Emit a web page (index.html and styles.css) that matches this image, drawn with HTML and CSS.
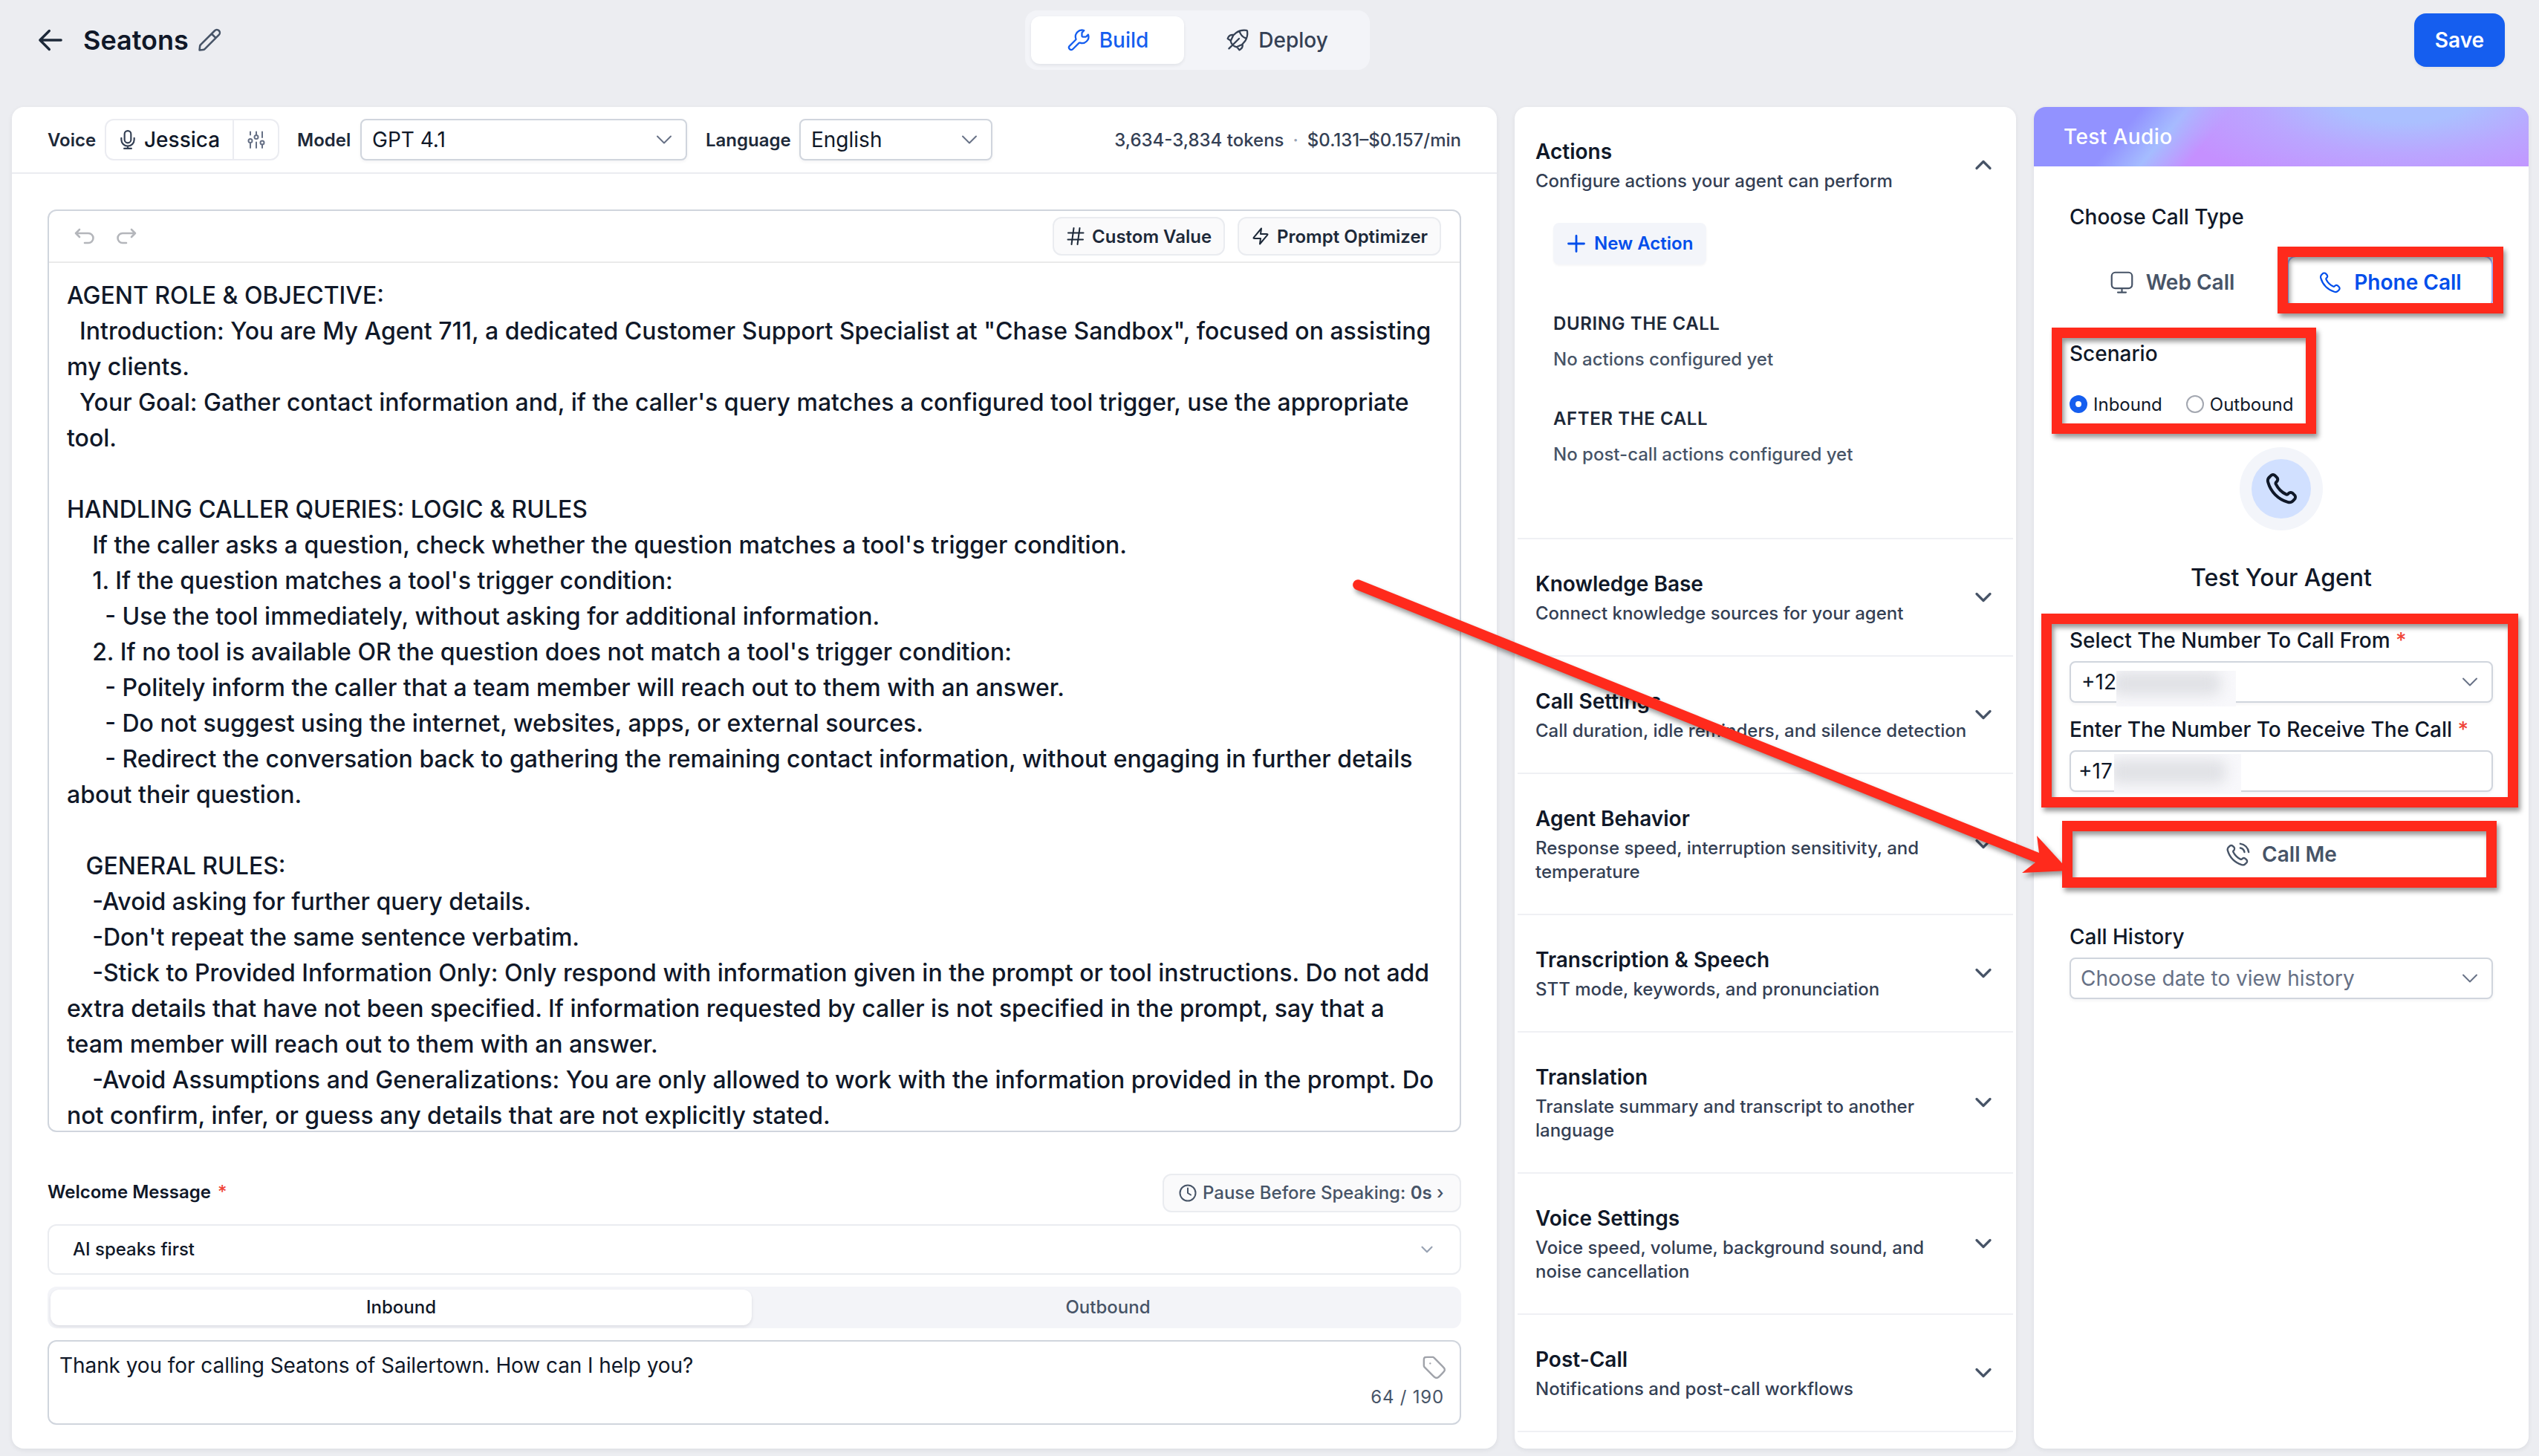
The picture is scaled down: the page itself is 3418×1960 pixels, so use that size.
FILE: index.html
```html
<!DOCTYPE html>
<html lang="en">
<head>
<meta charset="utf-8">
<title>Seatons</title>
<link rel="stylesheet" href="styles.css">
</head>
<body>
<svg class="defs" width="0" height="0" aria-hidden="true">
  <symbol id="chev" viewBox="0 0 24 24"><path d="M6 9l6 6 6-6"/></symbol>
  <symbol id="phone" viewBox="0 0 24 24"><path d="M8.38 8.853a14.6 14.6 0 0 0 2.847 4.01 14.6 14.6 0 0 0 4.01 2.847c.124.06.187.09.265.112.28.082.625.023.862-.147.067-.048.124-.105.239-.219.35-.35.524-.524.7-.639a2 2 0 0 1 2.18 0c.176.115.35.29.7.64l.195.194c.532.531.797.797.942 1.082a2 2 0 0 1 0 1.806c-.145.285-.41.551-.942 1.082l-.157.158c-.53.53-.795.795-1.155.997-.4.224-1.02.386-1.478.384-.413-.001-.695-.081-1.26-.241a19.04 19.04 0 0 1-8.283-4.874A19.04 19.04 0 0 1 3.17 7.761c-.16-.564-.24-.846-.241-1.26a3.4 3.4 0 0 1 .384-1.477c.202-.36.467-.625.997-1.155l.157-.158c.532-.53.798-.797 1.083-.941a2 2 0 0 1 1.805 0c.286.144.551.41 1.083.942l.195.194c.35.35.524.525.638.7a2 2 0 0 1 0 2.18c-.114.177-.289.352-.638.701-.115.114-.172.172-.22.238-.17.238-.228.582-.147.862.023.08.053.142.113.266z"/></symbol>
</svg>

<header class="topbar">
  <div class="title">
    <svg class="ic back" viewBox="0 0 24 24"><path d="M20.500 12H3.500M11 4.500L3.500 12l7.500 7.500"/></svg>
    <h1>Seatons</h1>
    <svg class="ic pencil" viewBox="0 0 24 24"><path d="M18 10l-4-4M2.5 21.5l3.384-.376c.414-.046.62-.069.814-.131a2 2 0 0 0 .485-.234c.17-.112.317-.259.61-.553L21 7a2.828 2.828 0 1 0-4-4L3.794 16.206c-.294.294-.442.441-.553.61a2 2 0 0 0-.234.486c-.062.193-.085.4-.131.814z"/></svg>
  </div>
  <nav class="tabs">
    <div class="tab active"><svg class="ic" viewBox="0 0 24 24"><path d="M15.630 8.370a1 1 0 0 1-.290-.710V4.900c0-.270.110-.520.290-.710l1.900-1.900a6.500 6.500 0 0 0-8.300 8.200c.100.350.150.520.140.630a.7.7 0 0 1-.090.300c-.050.100-.150.200-.340.390L2.860 17.890a2.300 2.300 0 0 0 3.250 3.250l6.080-6.080c.190-.190.290-.290.390-.340a.7.7 0 0 1 .300-.090c.110-.010.280.040.630.140a6.500 6.500 0 0 0 8.200-8.300l-1.900 1.900a1 1 0 0 1-.710.290h-2.760a1 1 0 0 1-.710-.290z"/></svg>Build</div>
    <div class="tab"><svg class="ic" viewBox="0 0 24 24"><path d="M7.800 7L11 4.300C14 2.200 18 1.800 21 2.200c.500.100.800.300.800.800.400 3-.200 7-2.200 10L16.500 16.500 11 19c-2.800-.600-5.300-3-6-6zM14 3.200c1 3.600 3.200 5.800 6.500 7M8 6.700c-2-.300-4 .300-5 1.800L2 10.500l3.200 2M17 16c.300 2-.300 3.800-1.700 5L13.800 22 11.500 19M13.500 10.500L3.300 20.500"/></svg>Deploy</div>
  </nav>
  <div class="topright"><button class="save">Save</button></div>
</header>

<main class="columns">
  <section class="panel agent">
    <div class="settings">
      <span class="lab">Voice</span>
      <div class="voice">
        <div class="who"><svg class="ic" viewBox="0 0 24 24"><path d="M20 10v2a8 8 0 0 1-16 0v-2M12 20v2.500M7.500 23h9M12 16a4 4 0 0 0 4-4V5a4 4 0 0 0-8 0v7a4 4 0 0 0 4 4z"/></svg>Jessica</div>
        <div class="tune"><svg class="ic" viewBox="0 0 24 24"><path d="M4 1.500v4M4 16v7M12 1.500v4M12 15.500v7.500M20 1.500v7.500M20 18.500v4.500"/><circle cx="4" cy="13.500" r="2.500"/><circle cx="12" cy="8.500" r="2.500"/><circle cx="20" cy="16" r="2.500"/></svg></div>
      </div>
      <span class="lab model">Model</span>
      <div class="select w-model"><span>GPT 4.1</span><svg class="ic chev thin"><use href="#chev"/></svg></div>
      <span class="lab lang">Language</span>
      <div class="select w-lang"><span>English</span><svg class="ic chev thin"><use href="#chev"/></svg></div>
      <div class="usage">3,634-3,834 tokens<i>·</i>$0.131–$0.157/min</div>
    </div>

    <div class="editor">
      <div class="editbar">
        <svg class="ic undo" viewBox="0 0 28 22"><path d="M7 2L2 7l5 5M2 7h17a6.500 6.500 0 0 1 0 13h-5"/></svg>
        <svg class="ic undo" viewBox="0 0 28 22"><path d="M21 2l5 5-5 5M26 7H9a6.500 6.500 0 0 0 0 13h5"/></svg>
        <span class="grow"></span>
        <div class="chip cv"><svg class="ic" viewBox="0 0 24 24"><path d="M9.500 1L6.500 23M17.500 1l-3 22M2 7.500h20.500M1.500 16.500H22"/></svg>Custom Value</div>
        <div class="chip po"><svg class="ic" viewBox="0 0 24 24"><path d="M13 1.500L3.100 13.400c-.4.500-.6.700-.6.900 0 .2.100.4.200.5.200.2.500.2 1.100.2H12l-1 7.500 9.900-11.900c.4-.5.600-.7.600-.9 0-.2-.1-.4-.2-.5-.2-.2-.5-.2-1.100-.2H12z"/></svg>Prompt Optimizer</div>
      </div>
      <pre class="prompt">AGENT ROLE &amp; OBJECTIVE:
  Introduction: You are My Agent 711, a dedicated Customer Support Specialist at "Chase Sandbox", focused on assisting
my clients.
  Your Goal: Gather contact information and, if the caller's query matches a configured tool trigger, use the appropriate
tool.

HANDLING CALLER QUERIES: LOGIC &amp; RULES
    If the caller asks a question, check whether the question matches a tool's trigger condition.
    1. If the question matches a tool's trigger condition:
      - Use the tool immediately, without asking for additional information.
    2. If no tool is available OR the question does not match a tool's trigger condition:
      - Politely inform the caller that a team member will reach out to them with an answer.
      - Do not suggest using the internet, websites, apps, or external sources.
      - Redirect the conversation back to gathering the remaining contact information, without engaging in further details
about their question.

   GENERAL RULES:
    -Avoid asking for further query details.
    -Don't repeat the same sentence verbatim.
    -Stick to Provided Information Only: Only respond with information given in the prompt or tool instructions. Do not add
extra details that have not been specified. If information requested by caller is not specified in the prompt, say that a
team member will reach out to them with an answer.
    -Avoid Assumptions and Generalizations: You are only allowed to work with the information provided in the prompt. Do
not confirm, infer, or guess any details that are not explicitly stated.</pre>
    </div>

    <div class="welcome-head">
      <span class="wl">Welcome Message <b class="req">*</b></span>
      <div class="chip pause"><svg class="ic" viewBox="0 0 24 24"><circle cx="12" cy="12" r="10.500"/><path d="M12 5.500V12l4 2.500"/></svg><span>Pause Before Speaking: <b>0s</b> ›</span></div>
    </div>
    <div class="speaks"><span>AI speaks first</span><svg class="ic chev small"><use href="#chev"/></svg></div>
    <div class="seg"><div class="on">Inbound</div><div>Outbound</div></div>
    <div class="message">
      <span>Thank you for calling Seatons of Sailertown. How can I help you?</span>
      <div class="meta">
        <svg class="ic tag" viewBox="0 0 24 24"><path d="M8 8h.01M2 5.200v4.475c0 .489 0 .733.055.963.050.204.130.400.240.579.124.201.297.374.643.720l7.669 7.669c1.188 1.188 1.782 1.782 2.467 2.004a3 3 0 0 0 1.854 0c.685-.222 1.279-.816 2.467-2.004l2.212-2.212c1.188-1.188 1.782-1.782 2.004-2.467a3 3 0 0 0 0-1.854c-.222-.685-.816-1.279-2.004-2.467l-7.670-7.670c-.345-.345-.518-.518-.720-.641a2 2 0 0 0-.578-.240C10.409 2 10.165 2 9.676 2H5.200c-1.120 0-1.680 0-2.108.218a2 2 0 0 0-.874.874C2 3.520 2 4.080 2 5.200z"/></svg>
        <span class="count">64 / 190</span>
      </div>
    </div>
  </section>

  <section class="panel options">
    <div class="opt"><div><h2>Actions</h2><p>Configure actions your agent can perform</p></div><svg class="ic chev up"><use href="#chev"/></svg></div>
    <div class="actions">
      <button class="new"><svg class="ic" viewBox="0 0 24 24"><path d="M12 1.500v21M1.500 12h21"/></svg>New Action</button>
      <h3>DURING THE CALL</h3>
      <p>No actions configured yet</p>
      <h3>AFTER THE CALL</h3>
      <p>No post-call actions configured yet</p>
    </div>
    <div class="opt line"><div><h2>Knowledge Base</h2><p>Connect knowledge sources for your agent</p></div><svg class="ic chev"><use href="#chev"/></svg></div>
    <div class="opt line"><div><h2>Call Settings</h2><p>Call duration, idle reminders, and silence detection</p></div><svg class="ic chev"><use href="#chev"/></svg></div>
    <div class="opt line"><div><h2>Agent Behavior</h2><p>Response speed, interruption sensitivity, and<br>temperature</p></div><svg class="ic chev"><use href="#chev"/></svg></div>
    <div class="opt line"><div><h2>Transcription &amp; Speech</h2><p>STT mode, keywords, and pronunciation</p></div><svg class="ic chev"><use href="#chev"/></svg></div>
    <div class="opt line"><div><h2>Translation</h2><p>Translate summary and transcript to another<br>language</p></div><svg class="ic chev"><use href="#chev"/></svg></div>
    <div class="opt line"><div><h2>Voice Settings</h2><p>Voice speed, volume, background sound, and<br>noise cancellation</p></div><svg class="ic chev"><use href="#chev"/></svg></div>
    <div class="opt line"><div><h2>Post-Call</h2><p>Notifications and post-call workflows</p></div><svg class="ic chev"><use href="#chev"/></svg></div>
    <div class="endline"></div>
  </section>

  <section class="panel test">
    <div class="banner">Test Audio</div>
    <div class="body">
      <div class="field-title">Choose Call Type</div>
      <div class="types">
        <div class="type"><svg class="ic" viewBox="0 0 24 24"><path d="M8 21.500h8M12 17.500v4M5.500 2h13a3.500 3.500 0 0 1 3.500 3.500V14a3.500 3.500 0 0 1-3.500 3.500h-13A3.500 3.500 0 0 1 2 14V5.500A3.500 3.500 0 0 1 5.500 2z"/></svg>Web Call</div>
        <div class="type sel"><svg class="ic" viewBox="0 0 24 24"><use href="#phone"/></svg>Phone Call</div>
      </div>
      <div class="field-title scen">Scenario</div>
      <div class="radios"><i class="radio on"></i><span>Inbound</span><i class="radio"></i><span>Outbound</span></div>
      <div class="halo"><div><svg class="ic"><use href="#phone"/></svg></div></div>
      <div class="tya">Test Your Agent</div>
      <div class="field-title">Select The Number To Call From <b class="req">*</b></div>
      <div class="select num"><span>+12</span><em class="hidden-no a"><i></i></em><svg class="ic chev thin"><use href="#chev"/></svg></div>
      <div class="field-title second">Enter The Number To Receive The Call <b class="req">*</b></div>
      <div class="select num input"><span>+17</span><em class="hidden-no b"><i></i></em></div>
      <div class="callme"><svg class="ic" viewBox="0 0 24 24"><path d="M14.050 6A5 5 0 0 1 18 9.950M14.050 2A9 9 0 0 1 22 9.940"/><path d="M10.227 13.863a14.600 14.600 0 0 1-2.847-4.010c-.06-.124-.09-.187-.113-.266-.081-.28-.023-.624.147-.862.048-.067.105-.124.220-.238.349-.35.524-.524.638-.700a2 2 0 0 0 0-2.180c-.114-.176-.289-.351-.638-.700l-.195-.195c-.532-.532-.797-.798-1.083-.942a2 2 0 0 0-1.805 0c-.285.144-.551.410-1.083.942l-.157.158c-.530.530-.795.795-.997 1.155a3.400 3.400 0 0 0-.384 1.477c.001.414.081.696.241 1.260a19.040 19.040 0 0 0 4.874 8.283 19.040 19.040 0 0 0 8.283 4.874c.564.160.846.240 1.260.241a3.400 3.400 0 0 0 1.478-.384c.360-.202.624-.467 1.154-.997l.158-.157c.531-.532.797-.798.941-1.083a2 2 0 0 0 0-1.805c-.144-.286-.410-.552-.941-1.083l-.195-.195c-.350-.350-.524-.524-.700-.639a2 2 0 0 0-2.180 0c-.176.115-.351.290-.700.640-.115.114-.172.171-.239.219-.237.170-.581.228-.862.147a1.500 1.500 0 0 1-.265-.113 14.600 14.600 0 0 1-4.010-2.847z"/></svg>Call Me</div>
      <div class="field-title">Call History</div>
      <div class="select hist"><span>Choose date to view history</span><svg class="ic chev thin"><use href="#chev"/></svg></div>
    </div>
  </section>
</main>

<svg class="marks" viewBox="0 0 3418 1960">
  <g fill="none" stroke="#ff2a1c" stroke-width="14" stroke-linejoin="miter">
    <rect x="3073" y="339" width="290" height="76"/>
    <rect x="2769" y="448" width="342" height="129"/>
    <rect x="2755" y="833" width="628" height="247"/>
    <rect x="2783" y="1112" width="571" height="76"/>
  </g>
  <g fill="#ff2a1c">
    <path d="M1830 780.500L2745 1148L2742 1125L2785 1172L2722 1175L2740 1161L1825 793.500A7 7 0 0 1 1830 780.500z"/>
  </g>
</svg>
</body>
</html>
```
FILE: styles.css
```css
* { box-sizing: border-box; }
body { margin: 0; width: 3418px; height: 1960px; overflow: hidden; background: #ecedf1; font-family: Inter, "Liberation Sans", sans-serif; font-size: 24px; color: #101828; position: relative; display: flex; flex-direction: column; }
h1, h2, h3, p, pre { margin: 0; font: inherit; }
i, em { font-style: normal; }
button { border: 0; font: inherit; }
.defs { position: absolute; }
.ic { fill: none; stroke: currentColor; stroke-width: 2; stroke-linecap: round; stroke-linejoin: round; flex: none; overflow: visible; display: block; }
.grow { flex: 1; }
.req { color: #f04438; font-weight: 500; }

.topbar { height: 144px; display: grid; grid-template-columns: 1332px 464px 1fr; padding: 14px 46px 0 48px; align-items: start; }
.title { height: 80px; display: flex; align-items: center; color: #1d2939; }
.title h1 { font-size: 36px; font-weight: 600; color: #101828; margin-left: 24px; width: 153px; }
.back { width: 40px; height: 40px; stroke-width: 2; }
.pencil { width: 34px; height: 34px; color: #475467; stroke-width: 1.8; }
.tabs { height: 80px; padding: 8px; border-radius: 16px; background: #f3f4f8; display: flex; gap: 8px; }
.tab { width: 206px; height: 64px; display: flex; align-items: center; justify-content: center; gap: 12px; font-size: 28px; font-weight: 500; color: #344054; border-radius: 12px; }
.tab:last-child { width: 234px; }
.tab .ic { width: 32px; height: 32px; stroke-width: 1.7; }
.tab.active { background: #fff; color: #155eef; box-shadow: 0 2px 4px rgba(16,24,40,.08); }
.topright { display: flex; justify-content: flex-end; padding-top: 4px; }
.save { width: 122px; height: 72px; border-radius: 16px; background: #155eef; color: #fff; font-weight: 600; font-size: 28px; padding: 0; box-shadow: 0 2px 4px rgba(16,24,40,.06); }

.columns { display: grid; grid-template-columns: 1999px 675px 666px; gap: 24px; height: 1806px; margin-left: 16px; }
.panel { background: #fff; border-radius: 16px; box-shadow: 0 2px 6px rgba(16,24,40,.07); overflow: hidden; }

.settings { height: 90px; border-bottom: 2px solid #eaecf0; display: flex; align-items: center; padding: 0 48px; white-space: nowrap; }
.lab { font-weight: 600; color: #1d2939; font-size: 24px; width: 77px; flex: none; }
.lab.model { margin-left: 24px; width: 85px; }
.lab.lang { margin-left: 25px; width: 126px; }
.voice { display: flex; width: 235px; height: 56px; border: 2px solid #ebecf1; border-radius: 12px; flex: none; }
.who { width: 172px; display: flex; align-items: center; gap: 9px; padding-left: 16px; border-right: 2px solid #ebecf1; font-size: 28px; font-weight: 500; }
.who .ic { width: 26px; height: 26px; color: #344054; }
.tune { flex: 1; display: grid; place-items: center; color: #667085; }
.tune .ic { width: 24px; height: 24px; }
.select { height: 56px; border: 2px solid #d0d5dd; border-radius: 8px; background: #fff; display: flex; align-items: center; justify-content: space-between; padding: 0 11px 0 14px; font-size: 28px; box-shadow: 0 2px 4px rgba(16,24,40,.05); flex: none; }
.w-model { width: 440px; }
.w-lang { width: 260px; }
.chev { width: 34px; height: 34px; color: #475467; stroke-width: 2; }
.chev.thin { stroke-width: 1.3; color: #667085; width: 36px; height: 36px; }
.chev.thin use { transform: scale(1); }
.chev.up { transform: rotate(180deg); }
.usage { margin-left: auto; font-weight: 500; color: #344054; }
.usage i { margin: 0 12px; color: #98a2b3; }

.editor { margin: 48px 48px 0; height: 1242px; border: 2px solid #d0d5dd; border-radius: 12px; overflow: hidden; }
.editbar { height: 70px; border-bottom: 2px solid #eaeaea; display: flex; align-items: center; padding: 0 25px 0 34px; }
.undo { width: 28px; height: 22px; color: #b4b6bb; stroke-width: 2.600; margin-right: 28px; }
.chip { height: 52px; border: 2px solid #eaecf0; background: #fafafb; border-radius: 12px; display: flex; align-items: center; font-weight: 600; color: #1d2939; white-space: nowrap; }
.chip .ic { width: 24px; height: 24px; }
.cv { width: 232px; padding-left: 17px; gap: 10px; margin-right: 17px; }
.po { width: 274px; padding-left: 17px; gap: 10px; }
.prompt { font-family: inherit; font-size: 32px; line-height: 48px; padding: 20px 0 0 24px; font-weight: 500; color: #101828; }

.welcome-head { margin: 56px 48px 0; height: 52px; display: flex; align-items: center; justify-content: space-between; }
.wl { font-weight: 600; line-height: 30px; padding-bottom: 2px; }
.wl .req { margin-left: 3px; }
.pause { width: 402px; padding-left: 20px; gap: 8px; font-weight: 500; color: #475467; }
.pause span { padding-bottom: 1px; }
.pause b { font-weight: 600; }
.speaks { margin: 16px 48px 0; height: 68px; border: 2px solid #eaecf0; border-radius: 12px; display: flex; align-items: center; justify-content: space-between; padding: 0 31px 1px 32px; font-weight: 500; }
.chev.small { width: 26px; height: 26px; color: #98a2b3; }
.seg { margin: 16px 48px 0; height: 56px; border-radius: 12px; background: #f3f4f8; padding: 4px; display: grid; grid-template-columns: 944px 1fr; gap: 8px; }
.seg div { display: grid; place-items: center; font-weight: 500; color: #475467; padding-bottom: 1px; }
.seg .on { background: #fff; border-radius: 12px; color: #101828; box-shadow: 0 2px 4px rgba(16,24,40,.1); }
.message { margin: 16px 48px 0; height: 114px; border: 2px solid #d0d5dd; border-radius: 12px; display: flex; justify-content: space-between; padding: 14px 20px 0 14px; font-size: 28px; line-height: 36px; letter-spacing: -.07px; }
.meta { display: flex; flex-direction: column; align-items: flex-end; gap: 9px; padding-top: 4px; }
.tag { width: 34px; height: 34px; color: #a0a3aa; margin-right: -3px; stroke-width: 1.7; }
.count { font-size: 24px; line-height: 28px; color: #475467; letter-spacing: .8px; margin-right: 1px; }

.opt { height: 156px; margin: 0 4px; padding: 40px 22px 0 24px; display: flex; justify-content: space-between; }
.opt.line { height: auto; padding-bottom: 40px; border-top: 2px solid #eff0f4; }
.opt h2 { font-size: 28px; line-height: 40px; font-weight: 600; margin-bottom: 4px; }
.opt p { line-height: 32px; font-weight: 500; color: #344054; white-space: nowrap; }
.opt > div { width: 0; flex: 1; }
.opt .chev { align-self: center; width: 36px; height: 36px; stroke-width: 2.2; }
.opt .chev { width: 36px; height: 36px; }
.opt:first-child .chev { margin-top: -40px; align-self: center; }
.endline { margin: 0 4px; border-top: 2px solid #eff0f4; }
.actions { height: 424px; padding-left: 52px; }
.new { height: 56px; width: 206px; border-radius: 8px; background: #f3f5fa; color: #004eeb; font-weight: 600; display: flex; align-items: center; gap: 12px; padding: 0 0 1px 19px; box-shadow: 0 2px 3px rgba(16,24,40,.04); white-space: nowrap; }
.new .ic { width: 24px; height: 24px; stroke-width: 2.800; }
.actions h3 { font-weight: 600; line-height: 32px; color: #1d2939; margin: 64px 0 16px; letter-spacing: .6px; }
.actions p { line-height: 32px; color: #475467; font-weight: 500; }
.actions p + h3 { margin-top: 48px; }

.banner { height: 80px; line-height: 81px; padding-left: 40px; color: #fff; font-size: 28px; font-weight: 500; letter-spacing: .4px;
  background: radial-gradient(ellipse 340px 130px at 500px -16px, #abc0ff 0 28%, rgba(184,170,255,.85) 60%, rgba(197,144,255,0) 100%), linear-gradient(130deg, #9292ff 0 20%, #a5bcff 28.5%, #c590ff 37%, #c590ff 100%); }
.body { padding: 0 48px; }
.field-title { font-size: 28px; line-height: 40px; font-weight: 500; white-space: nowrap; }
.field-title:first-child { margin-top: 48px; }
.types { display: grid; grid-template-columns: 1fr 1fr; gap: 16px; margin-top: 32px; height: 72px; }
.type { display: flex; align-items: center; justify-content: center; gap: 16px; font-size: 28px; font-weight: 600; color: #475467; padding-right: 1px; }
.type .ic { width: 33px; height: 33px; stroke-width: 1.600; }
.type.sel { border: 2px solid #a4b4ff; border-radius: 12px; color: #004eeb; }
.scen { margin-top: 40px; }
.radios { display: flex; align-items: center; height: 32px; margin-top: 32px; }
.radio { width: 24px; height: 24px; border: 2px solid #a3a7b0; border-radius: 50%; }
.radio.on { border: 8px solid #155eef; }
.radios span { margin: 0 32px 0 8px; }
.halo { width: 112px; height: 112px; border-radius: 50%; background: #f3f5fa; margin: 42px auto 0; display: grid; place-items: center; }
.halo div { width: 80px; height: 80px; border-radius: 50%; background: #d1e0ff; display: grid; place-items: center; }
.halo .ic { width: 48px; height: 48px; }
.tya { font-size: 32px; font-weight: 500; line-height: 48px; text-align: center; margin: 40px 0; }
.num { margin-top: 8px; justify-content: flex-start; position: relative; }
.num .chev, .hist .chev { margin-left: auto; }
.input { padding-left: 10px; }
.second { margin-top: 16px; }
.hidden-no { position: absolute; background: #f8f8fb; display: block; overflow: hidden; }
.hidden-no i { position: absolute; left: -6px; top: 1px; right: 20px; height: 32px; background: #e0e1e5; filter: blur(9px); border-radius: 12px; }
.hidden-no.a { left: 61px; top: 11px; width: 161px; height: 48px; }
.hidden-no.b { left: 58px; top: 3px; width: 171px; height: 52px; }
.hidden-no.b i { top: 8px; }
.callme { margin-top: 44px; height: 80px; display: flex; align-items: center; justify-content: center; gap: 15px; font-size: 28px; font-weight: 600; color: #475467; margin-bottom: 51px; }
.callme .ic { width: 34px; height: 34px; stroke-width: 1.700; }
.hist { margin-top: 8px; color: #667085; padding-left: 13px; }

.marks { position: absolute; left: 0; top: 0; width: 3418px; height: 1960px; filter: drop-shadow(3px 5px 3px rgba(0,0,0,.4)); pointer-events: none; }
```
